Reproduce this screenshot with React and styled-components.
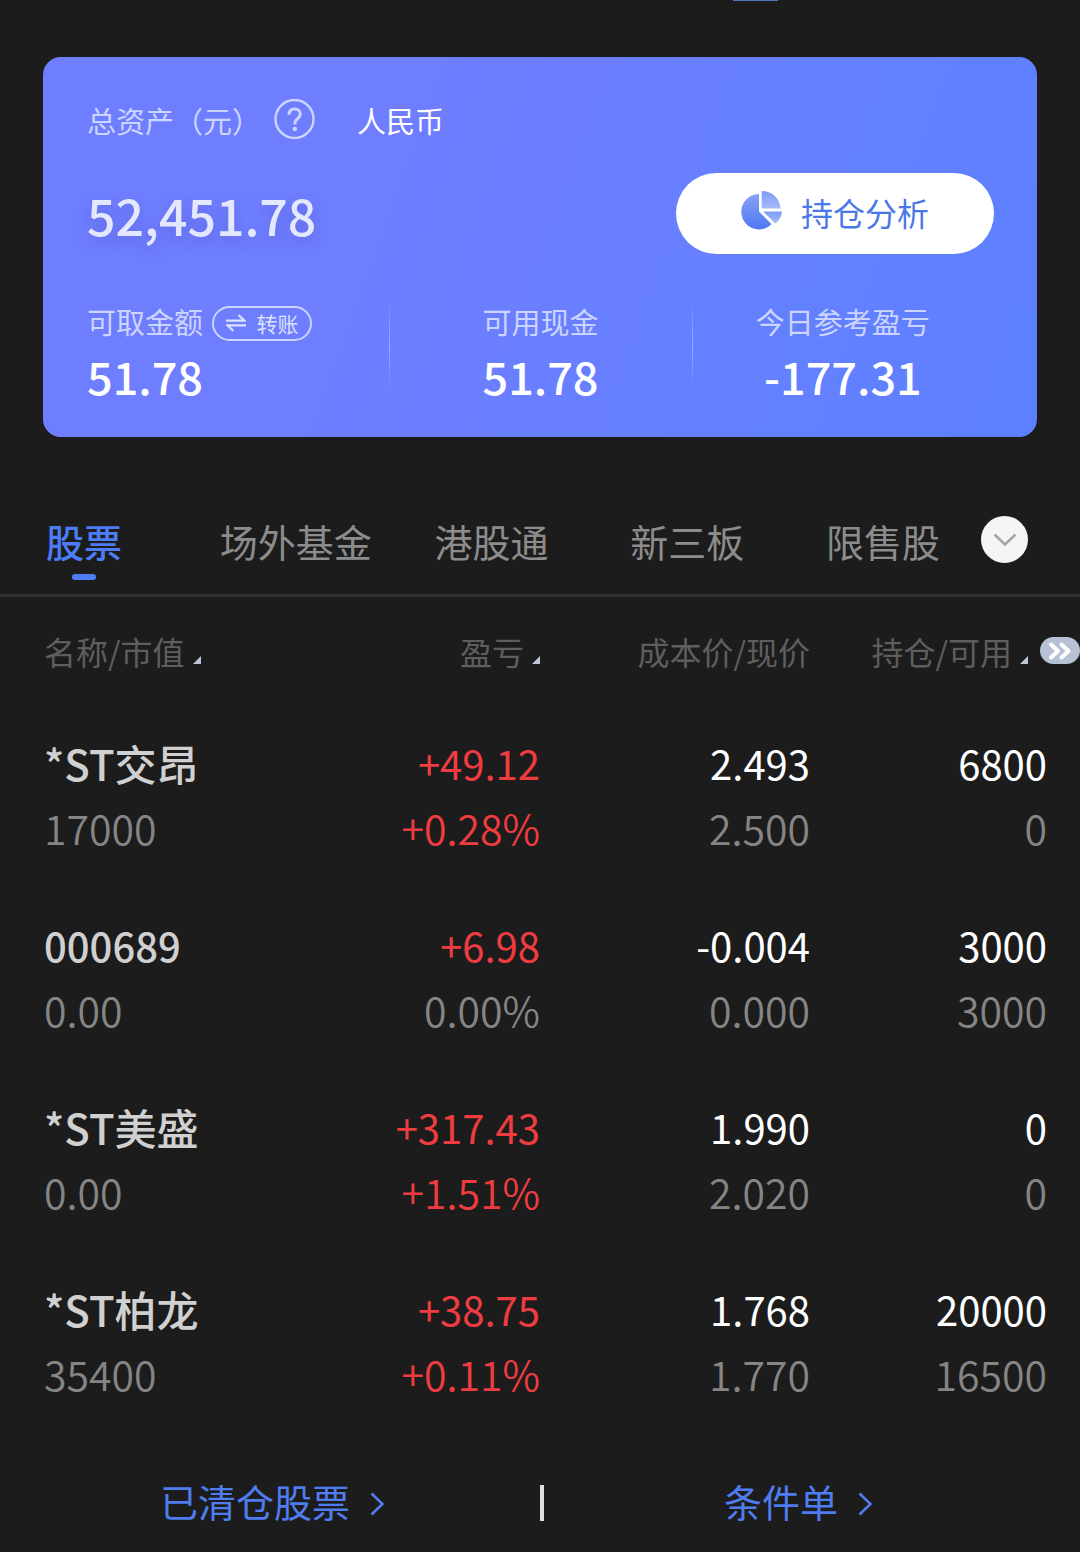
import React from "react";
import styled, { createGlobalStyle } from "styled-components";

const tabs = ["股票", "场外基金", "港股通", "新三板", "限售股"];

const holdings = [
  {
    name: "*ST交昂",
    value: "17000",
    profit: "+49.12",
    rate: "+0.28%",
    cost: "2.493",
    price: "2.500",
    amount: "6800",
    usable: "0",
  },
  {
    name: "000689",
    value: "0.00",
    profit: "+6.98",
    rate: "0.00%",
    cost: "-0.004",
    price: "0.000",
    amount: "3000",
    usable: "3000",
  },
  {
    name: "*ST美盛",
    value: "0.00",
    profit: "+317.43",
    rate: "+1.51%",
    cost: "1.990",
    price: "2.020",
    amount: "0",
    usable: "0",
  },
  {
    name: "*ST柏龙",
    value: "35400",
    profit: "+38.75",
    rate: "+0.11%",
    cost: "1.768",
    price: "1.770",
    amount: "20000",
    usable: "16500",
  },
];

const isUp = (text) => text.startsWith("+");
const isCode = (text) => /^\d+$/.test(text);

const SortMark = () => (
  <svg width="8" height="8" viewBox="0 0 8 8" aria-hidden="true">
    <path d="M8 0V8H0Z" fill="#bcc6d4" />
  </svg>
);

const Arrow = () => (
  <svg width="14" height="24" viewBox="0 0 14 24" fill="none" aria-hidden="true">
    <path d="M1.5 1.500L12.500 12L1.500 22.500" stroke="#4f7df0" strokeWidth="2.600" />
  </svg>
);

const AssetCard = () => (
  <Card>
    <CardTop>
      <Label>总资产（元）</Label>
      <HelpButton aria-label="说明">
        <svg width="41" height="41" viewBox="0 0 41 41" fill="none">
          <circle cx="20.500" cy="20" r="19" stroke="#ccd5ff" strokeWidth="2.400" />
          <path
            d="M15 15.700C15 11.900 17.300 9.900 20.700 9.900C24 9.900 26.300 12.100 26.300 15.100C26.300 17.700 24.800 18.800 23.100 20.100C21.500 21.300 20.800 22.300 20.800 25.600"
            stroke="#ccd5ff"
            strokeWidth="3"
          />
          <circle cx="20.800" cy="30" r="2.300" fill="#ccd5ff" />
        </svg>
      </HelpButton>
      <Currency>人民币</Currency>
    </CardTop>
    <TotalRow>
      <Total>52,451.78</Total>
      <AnalysisButton>
        <svg width="44" height="40" viewBox="0 0 44 40" aria-hidden="true">
          <defs>
            <linearGradient id="pie" x1="0" y1="0" x2="0" y2="1">
              <stop offset="0" stopColor="#86a3f4" />
              <stop offset="1" stopColor="#4f78f2" />
            </linearGradient>
            <linearGradient id="slice" x1="0" y1="0" x2="0" y2="1">
              <stop offset="0" stopColor="#7f9df5" />
              <stop offset="1" stopColor="#a3b9fa" />
            </linearGradient>
          </defs>
          <path d="M20 4A17.700 17.700 0 1 0 32.500 34.200L20 21.500Z" fill="url(#pie)" />
          <path d="M22.700 1A18.500 18 0 0 1 41.500 18.500H22.700Z" fill="url(#slice)" />
          <path d="M24 21.500H43Q42.500 28.500 36.500 33.500Z" fill="url(#slice)" />
        </svg>
        持仓分析
      </AnalysisButton>
    </TotalRow>
    <Stats>
      <Stat $first>
        <StatHead>
          <Label>可取金额</Label>
          <TransferButton>
            <svg width="20" height="18" viewBox="0 0 20 18" fill="none" aria-hidden="true">
              <path d="M0 6.700H18.500L12.500 1M20 11.300H1.500L7.500 17" stroke="#dbe2ff" strokeWidth="2.200" />
            </svg>
            转账
          </TransferButton>
        </StatHead>
        <StatValue>51.78</StatValue>
      </Stat>
      <Stat>
        <StatHead>
          <Label>可用现金</Label>
        </StatHead>
        <StatValue>51.78</StatValue>
      </Stat>
      <Stat>
        <StatHead>
          <Label>今日参考盈亏</Label>
        </StatHead>
        <StatValue>-177.31</StatValue>
      </Stat>
    </Stats>
  </Card>
);

const HoldingTable = () => (
  <Table>
    <thead>
      <tr>
        <Th $left>
          <SortButton>
            名称/市值 <SortMark />
          </SortButton>
        </Th>
        <Th>
          <SortButton>
            盈亏 <SortMark />
          </SortButton>
        </Th>
        <Th>成本价/现价</Th>
        <Th $last>
          <LastHead>
            <SortButton>
              持仓/可用 <SortMark />
            </SortButton>
            <MoreButton aria-label="更多列">
              <svg width="24" height="18" viewBox="0 0 24 18" fill="none">
                <path
                  d="M3 2.500L10 9L3 15.500M13.500 2.500L20.500 9L13.500 15.500"
                  stroke="#fff"
                  strokeWidth="4"
                  strokeLinecap="round"
                  strokeLinejoin="round"
                />
              </svg>
            </MoreButton>
          </LastHead>
        </Th>
      </tr>
    </thead>
    <tbody>
      {holdings.map((item) => (
        <tr key={item.name}>
          <Td $left>
            <Name $code={isCode(item.name)}>{item.name}</Name>
            <Sub>{item.value}</Sub>
          </Td>
          <Td>
            <Main $up={isUp(item.profit)}>{item.profit}</Main>
            <Sub $up={isUp(item.rate)}>{item.rate}</Sub>
          </Td>
          <Td>
            <Main>{item.cost}</Main>
            <Sub>{item.price}</Sub>
          </Td>
          <Td $last>
            <Main>{item.amount}</Main>
            <Sub>{item.usable}</Sub>
          </Td>
        </tr>
      ))}
    </tbody>
  </Table>
);

const App = () => {
  return (
    <>
      <GlobalStyle />
      <Page>
        <TopMark />
        <AssetCard />
        <TabBar>
          {tabs.map((tab, id) => (
            <Tab key={tab} $active={id === 0}>
              {tab}
            </Tab>
          ))}
          <ExpandButton aria-label="展开">
            <svg width="24" height="14" viewBox="0 0 24 14" fill="none">
              <path d="M1.500 1.500L12 11.500L22.500 1.500" stroke="#a6a6a6" strokeWidth="2.600" />
            </svg>
          </ExpandButton>
        </TabBar>
        <HoldingTable />
        <Footer>
          <FooterLink href="#cleared">
            已清仓股票 <Arrow />
          </FooterLink>
          <FooterLine />
          <FooterLink href="#orders" $second>
            条件单 <Arrow />
          </FooterLink>
        </Footer>
      </Page>
    </>
  );
};

const GlobalStyle = createGlobalStyle`
  * {
    box-sizing: border-box;
  }
  body {
    margin: 0;
    background-color: #1c1c1c;
    font-family: "Noto Sans CJK SC", "Noto Sans", sans-serif;
  }
  button {
    margin: 0;
    padding: 0;
    border: none;
    background: none;
    color: inherit;
    font: inherit;
    cursor: pointer;
  }
  svg {
    display: block;
    flex: none;
  }
`;

const Page = styled.main`
  background-color: #1c1c1c;
  overflow: hidden;
`;

const TopMark = styled.div`
  width: 45px;
  height: 1px;
  margin-left: 733px;
  background-color: #5273c0;
`;

const Card = styled.section`
  margin: 56px 43px 0;
  padding: 42px 43px 33px 44px;
  border-radius: 18px;
  background: linear-gradient(110deg, #6f7dff 0%, #6f7dff 35%, #6680ff 65%, #5c80ff 100%);
`;

const CardTop = styled.div`
  display: flex;
  align-items: center;
  height: 41px;
`;

const Label = styled.span`
  color: #ccd5ff;
  font-size: 29px;
  line-height: 42px;
`;

const HelpButton = styled.button`
  margin-left: 13px;
`;

const Currency = styled.span`
  margin-left: 42px;
  color: #fff;
  font-size: 29px;
  line-height: 42px;
`;

const TotalRow = styled.div`
  display: flex;
  align-items: center;
  justify-content: space-between;
  margin-top: 33px;
`;

const Total = styled.div`
  color: #e4e8fc;
  font-size: 50px;
  font-weight: 500;
  line-height: 80px;
  text-shadow: 0 6px 14px rgba(60, 70, 160, 0.3);
`;

const AnalysisButton = styled.button`
  display: flex;
  align-items: center;
  justify-content: center;
  gap: 18px;
  width: 318px;
  height: 81px;
  padding: 0 2px 4px 0;
  border-radius: 41px;
  background-color: #fff;
  color: #4a78e8;
  font-size: 32px;
  svg {
    margin-bottom: 4px;
  }
`;

const Stats = styled.div`
  display: grid;
  grid-template-columns: repeat(3, 1fr);
  margin-top: 46px;
`;

const Stat = styled.div`
  display: flex;
  flex-direction: column;
  align-items: ${(props) => (props.$first ? "flex-start" : "center")};
  gap: 6px;
  background: ${(props) =>
    props.$first
      ? "none"
      : "linear-gradient(rgba(255, 255, 255, 0), rgba(255, 255, 255, 0.35), rgba(255, 255, 255, 0)) left top / 1px 90px no-repeat"};
`;

const StatHead = styled.div`
  display: flex;
  align-items: center;
  gap: 9px;
`;

const TransferButton = styled.button`
  display: flex;
  align-items: center;
  justify-content: center;
  gap: 11px;
  width: 100px;
  height: 35px;
  margin-top: 4px;
  border: 2px solid #ccd5ff;
  border-radius: 18px;
  color: #dbe2ff;
  font-size: 21px;
  line-height: 30px;
`;

const StatValue = styled.div`
  color: #fff;
  font-size: 45px;
  font-weight: 500;
  line-height: 56px;
`;

const TabBar = styled.nav`
  display: grid;
  grid-template-columns: 198px repeat(4, 1fr) 47px;
  align-items: start;
  height: 82px;
  margin-top: 78px;
  padding-right: 52px;
  border-bottom: 3px solid #323232;
`;

const Tab = styled.button`
  display: flex;
  flex-direction: column;
  align-items: center;
  color: ${(props) => (props.$active ? "#4c7cf6" : "#8c8c8c")};
  font-size: 38px;
  font-weight: ${(props) => (props.$active ? 500 : 400)};
  line-height: 52px;
  white-space: nowrap;
  &:first-child {
    padding-right: 30px;
  }
  &::after {
    content: "";
    width: 24px;
    height: 6px;
    margin-top: 7px;
    border-radius: 3px;
    background-color: ${(props) => (props.$active ? "#4c7cf6" : "transparent")};
  }
`;

const ExpandButton = styled.button`
  display: flex;
  align-items: center;
  justify-content: center;
  width: 47px;
  height: 47px;
  margin-top: 1px;
  border-radius: 50%;
  background-color: #f5f5f5;
`;

const Table = styled.table`
  width: 100%;
  table-layout: fixed;
  border-collapse: collapse;
`;

const Th = styled.th`
  height: 107px;
  padding: 0;
  padding-left: ${(props) => (props.$left ? "44px" : "0")};
  color: #5e5e5e;
  font-size: 32px;
  font-weight: 400;
  line-height: 46px;
  text-align: ${(props) => (props.$left ? "left" : "right")};
  white-space: nowrap;
`;

const SortButton = styled.button`
  display: inline-flex;
  align-items: flex-end;
  gap: 8px;
  svg {
    margin-bottom: 10px;
  }
`;

const LastHead = styled.div`
  display: flex;
  align-items: center;
  justify-content: flex-end;
  gap: 12px;
`;

const MoreButton = styled.button`
  display: flex;
  align-items: center;
  justify-content: center;
  width: 40px;
  height: 27px;
  border-radius: 14px;
  background-color: #b6c2d4;
`;

const Td = styled.td`
  padding: 27px 0;
  padding-left: ${(props) => (props.$left ? "44px" : "0")};
  padding-right: ${(props) => (props.$last ? "33px" : "0")};
  text-align: ${(props) => (props.$left ? "left" : "right")};
  white-space: nowrap;
`;

const Name = styled.div`
  color: #d0d0d0;
  font-size: ${(props) => (props.$code ? "40px" : "42px")};
  font-weight: 500;
  line-height: 64px;
`;

const Main = styled.div`
  color: ${(props) => (props.$up ? "#f03c41" : "#fff")};
  font-size: 40px;
  line-height: 64px;
`;

const Sub = styled.div`
  color: ${(props) => (props.$up ? "#f03c41" : "#858585")};
  font-size: 41px;
  font-weight: 350;
  line-height: 64px;
`;

const Footer = styled.footer`
  display: grid;
  grid-template-columns: 50% 4px 1fr;
  align-items: center;
  padding: 41px 0 23px;
`;

const FooterLink = styled.a`
  display: flex;
  align-items: center;
  justify-content: center;
  gap: 20px;
  padding-left: ${(props) => (props.$second ? "0" : "4px")};
  padding-right: ${(props) => (props.$second ? "28px" : "0")};
  color: #4f7df0;
  font-size: 38px;
  line-height: 56px;
  text-decoration: none;
  svg {
    margin-top: 6px;
  }
`;

const FooterLine = styled.span`
  height: 36px;
  margin-top: 4px;
  background-color: #dedede;
`;

export default App;
